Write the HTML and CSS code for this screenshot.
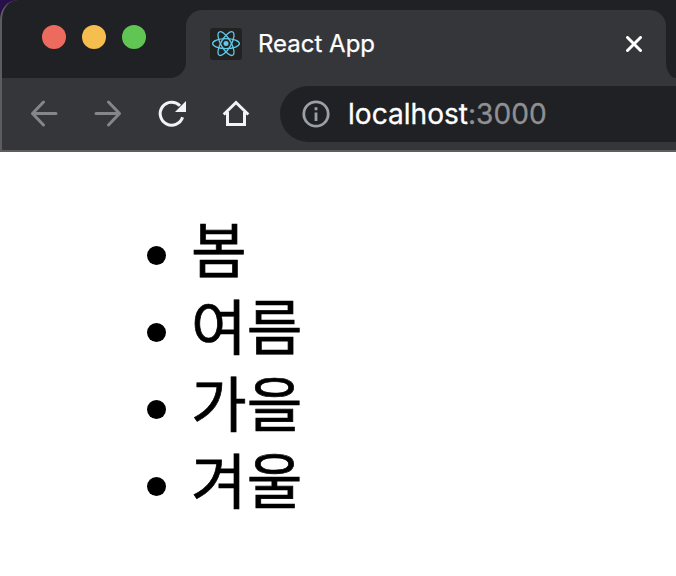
FILE: index.html
```html
<!DOCTYPE html>
<html lang="ko">
<head>
<meta charset="utf-8">
<title>React App</title>
<link rel="stylesheet" href="styles.css">
</head>
<body>
<header class="chrome">
  <div class="tabstrip">
    <div class="lights"><i class="light red"></i><i class="light yellow"></i><i class="light green"></i></div>
    <div class="tab">
      <svg class="favicon" viewBox="0 0 32 32">
        <rect width="32" height="32" rx="3" fill="#222"/>
        <g fill="none" stroke="#61c9e8" stroke-width="1.3">
          <ellipse cx="16" cy="15.6" rx="13.4" ry="5"/>
          <ellipse cx="16" cy="15.6" rx="13.4" ry="5" transform="rotate(60 16 15.6)"/>
          <ellipse cx="16" cy="15.6" rx="13.4" ry="5" transform="rotate(120 16 15.6)"/>
        </g>
        <circle cx="16" cy="15.6" r="2.5" fill="#61c9e8"/>
      </svg>
      <span class="tab-title">React App</span>
      <svg class="close" viewBox="0 0 16 16"><path d="M1.500 1.500l13 13M14.500 1.500l-13 13"/></svg>
    </div>
    <div class="rest"></div>
  </div>
  <div class="toolbar">
    <svg class="icon dim" viewBox="0 0 32 32"><path d="M28 15.500H4.500M15.500 4L4.500 15.500 15.500 27"/></svg>
    <svg class="icon dim" viewBox="0 0 32 32"><path d="M4 15.500h23.500M16.500 4L27.500 15.500 16.500 27"/></svg>
    <svg class="icon" viewBox="0 0 32 32"><path d="M26.600 19.300A11.500 11.500 0 1 1 24 7.700"/><path class="solid" d="M30 3v11H19z"/></svg>
    <svg class="icon" viewBox="0 0 32 32"><path d="M3.700 16.500L16 4.500l12.300 12M7.500 14v12.500h17V14"/></svg>
    <div class="address">
      <svg class="info" viewBox="0 0 28 28"><circle cx="14" cy="14" r="12.200"/><path d="M14 12.500v8.500M14 7.300v3"/></svg>
      <span class="url">localhost<span class="port">:3000</span></span>
    </div>
  </div>
</header>
<main>
  <ul class="seasons">
    <li><span>봄</span></li>
    <li><span>여름</span></li>
    <li><span>가을</span></li>
    <li><span>겨울</span></li>
  </ul>
</main>
</body>
</html>
```
FILE: styles.css
```css
* { box-sizing: border-box; }
body {
  margin: 0;
  height: 576px;
  overflow: hidden;
  background: #fff;
  font-family: Inter, "Noto Sans CJK KR", sans-serif;
}
.chrome {
  position: relative;
  height: 152px;
  background: #28104c;
  color: #fff;
}
.chrome::after {
  content: "";
  position: absolute;
  inset: 0;
  border: solid #5f5c60;
  border-width: 0 0 2px 2px;
  border-top-left-radius: 18px 20px;
}
.tabstrip {
  display: flex;
  height: 78px;
  background: linear-gradient(#202124 0 40px, #35363a 40px);
  border-top-left-radius: 18px 20px;
  overflow: hidden;
}
.lights {
  display: flex;
  flex-shrink: 0;
  gap: 16px;
  width: 186px;
  padding: 25px 0 0 42px;
  background: #202124;
  border-bottom-right-radius: 16px;
}
.light { width: 24px; height: 24px; border-radius: 50%; }
.red { background: #ed6a5e; }
.yellow { background: #f5be4f; }
.green { background: #61c554; }
.tab {
  display: flex;
  align-items: center;
  width: 480px;
  margin-top: 10px;
  padding: 0 24px;
  background: #35363a;
  border-radius: 16px 16px 0 0;
}
.favicon { width: 32px; height: 32px; }
.tab-title {
  flex: 1;
  margin-left: 16px;
  font-size: 24px;
  line-height: 32px;
  -webkit-text-stroke: 0.25px;
}
.close { width: 16px; height: 16px; }
.close path { fill: none; stroke: #fff; stroke-width: 3; stroke-linecap: round; }
.rest {
  flex: none;
  width: 10px;
  background: #202124;
  border-bottom-left-radius: 10px 16px;
}
.toolbar {
  display: flex;
  align-items: center;
  gap: 32px;
  height: 74px;
  padding: 0 0 2px 28px;
  background: #35363a;
}
.icon { flex: none; width: 32px; height: 32px; }
.icon path { fill: none; stroke: #f1f3f4; stroke-width: 3; }
.icon .solid { fill: #f1f3f4; stroke: none; }
.icon.dim path { stroke: #858688; stroke-linecap: round; stroke-linejoin: round; }
.address {
  display: flex;
  flex: 1;
  align-items: center;
  height: 56px;
  margin-left: -4px;
  padding-left: 22px;
  background: #202124;
  border-radius: 28px 0 0 28px;
}
.info { width: 28px; height: 28px; }
.info circle, .info path { fill: none; stroke: #9aa0a6; stroke-width: 2.8; }
.url {
  margin-left: 18px;
  font-size: 28.100px;
  line-height: 36px;
  -webkit-text-stroke: 0.3px;
}
.port { color: #8f9092; }
.seasons {
  list-style: none;
  margin: 0;
  padding: 61px 0 0 147px;
  color: #000;
  font: 60.500px/77px "Noto Sans CJK KR", sans-serif;
  -webkit-text-stroke: 0.7px;
}
.seasons li {
  display: flex;
  align-items: center;
  height: 77px;
}
.seasons li span { margin-top: -11px; }
.seasons li::before {
  content: "";
  width: 19px;
  height: 19px;
  margin: 8px 25px 0 0;
  border-radius: 50%;
  background: #000;
}
```
